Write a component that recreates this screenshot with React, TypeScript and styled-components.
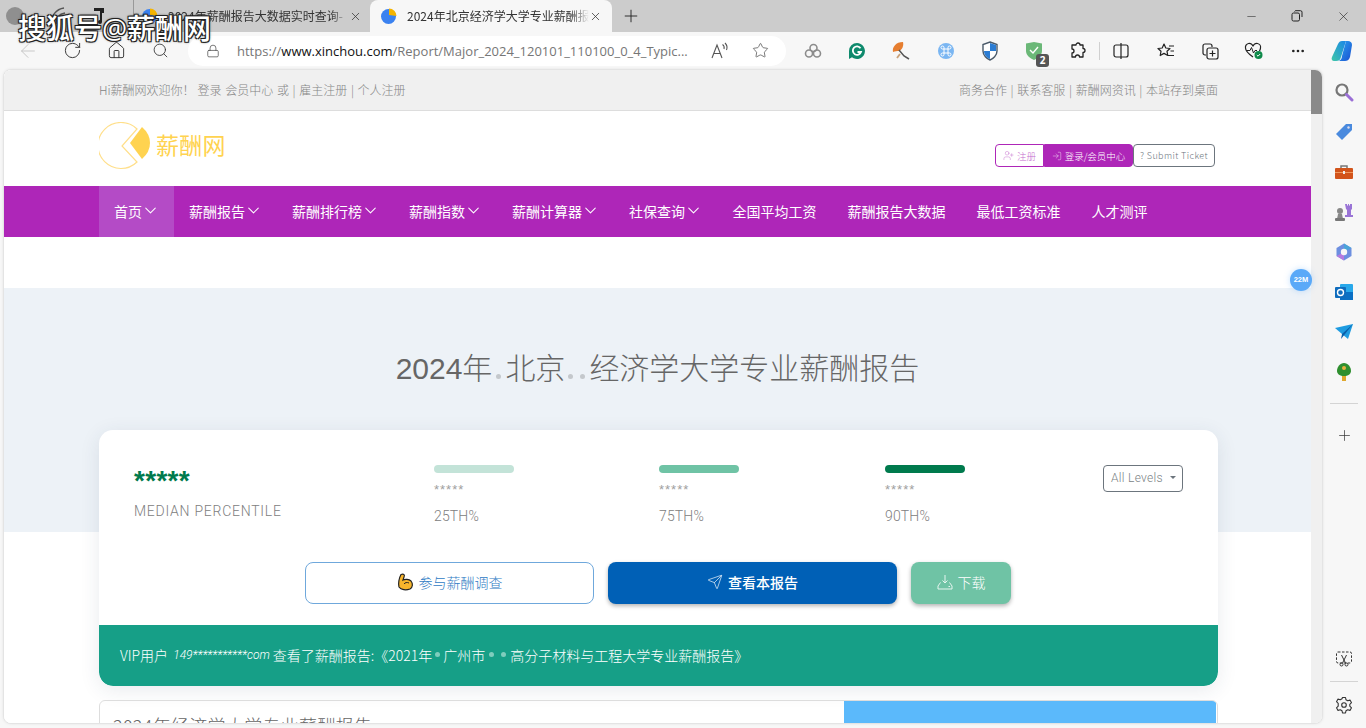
import React from "react";
import styled, { createGlobalStyle } from "styled-components";
import { ArrowLeft, RotateCw, House, Search, Lock, Star, Plus, X, Minus, Ellipsis, ChevronDown, UserPlus, LogIn, Send } from "lucide-react";

const CJK = `"Noto Sans CJK SC", "Noto Sans", sans-serif`;
const UI = `"Open Sans", "Noto Sans CJK SC", sans-serif`;
const LIGHT = `"Roboto", "Noto Sans CJK SC", sans-serif`;

const Global = createGlobalStyle`
  html, body { margin: 0; padding: 0; height: 100%; overflow: hidden; background: #f7f7f7; }
  * { box-sizing: border-box; }
`;

const Shell = styled.div`
  position: relative; width: 1366px; height: 728px; display: flex; flex-direction: column;
  background: #f7f7f7; overflow: hidden; font-family: ${CJK};
`;
const TabStrip = styled.div`
  height: 32px; background: #cccccc; display: flex; align-items: flex-end; flex: none;
`;
const Pinned = styled.div`
  width: 133px; height: 32px; display: flex; align-items: center; padding-left: 6px; gap: 24px; flex: none; color: #555;
`;
const Avatar = styled.span`
  width: 18px; height: 18px; border-radius: 50%; background: #8f8f8f; flex: none;
`;
const Tab = styled.div<{ $active?: boolean }>`
  height: 32px;
  width: ${p => (p.$active ? "242px" : "237px")};
  display: flex; align-items: center; flex: none;
  padding: 0 ${p => (p.$active ? "10px" : "8px")} 0 ${p => (p.$active ? "10px" : "7px")};
  background: ${p => (p.$active ? "#f7f7f7" : "transparent")};
  border-radius: ${p => (p.$active ? "8px 8px 0 0" : "0")};
  border-left: ${p => (p.$active ? "none" : "1px solid #999")};
  color: #333;
`;
const TabTitle = styled.span`
  flex: 1; margin-left: 9px; font: 12px/16px ${CJK}; white-space: nowrap; overflow: hidden;
  mask-image: linear-gradient(90deg, #000 90%, transparent);
`;
const NewTab = styled.div`
  width: 38px; height: 32px; display: flex; align-items: center; justify-content: center; color: #222; flex: none;
`;
const WindowButtons = styled.div`
  margin-left: auto; height: 32px; display: flex; align-items: center; color: #222; flex: none;
`;
const WinBtn = styled.div`
  width: 46px; height: 32px; display: flex; align-items: center; justify-content: center;
`;
const Toolbar = styled.div`
  height: 37px; display: flex; align-items: center; flex: none; padding-left: 6px; color: #333;
`;
const NavIcon = styled.div<{ $dim?: boolean }>`
  width: 44px; height: 36px; display: flex; align-items: center; justify-content: center; flex: none;
  color: ${p => (p.$dim ? "#c4c4c4" : "#333")};
`;
const AddressBar = styled.div`
  width: 598px; height: 30px; margin-left: 6px; border-radius: 15px; background: #fff; display: flex; align-items: center;
  padding: 0 6px 0 18px; flex: none; color: #444;
  & > svg { flex: none; }
`;
const Url = styled.div`
  flex: 1; min-width: 0; overflow: hidden; margin-left: 17px; font: 13px/18px ${UI}; color: #767676; white-space: nowrap;
  b { font-weight: 400; color: #111; }
`;
const AddressIcon = styled.div`
  width: 40px; display: flex; justify-content: center; flex: none; color: #555;
`;
const ExtIcons = styled.div`
  display: flex; align-items: center; margin-left: 5px; flex: 1;
`;
const Ext = styled.div`
  position: relative; width: 44.2px; height: 36px; display: flex; align-items: center; justify-content: center; flex: none;
`;
const ExtBadge = styled.span`
  position: absolute; right: 7px; bottom: 2px; width: 13px; height: 13px; border-radius: 3px; background: #555; color: #fff;
  font: 700 10px/13px ${UI}; text-align: center;
`;
const ToolDivider = styled.span`
  width: 1px; height: 18px; background: #d0d0d0; margin: 0 -1px; flex: none;
`;
const Body = styled.div`
  flex: 1; min-height: 0; display: flex; padding-bottom: 4px;
`;
const Viewport = styled.div`
  position: relative; margin-left: 3px; width: 1320px; flex: none; display: flex; overflow: hidden; background: #fff;
  border: 1px solid #e4e4e4; border-radius: 8px; box-shadow: 0 0 3px rgba(0,0,0,.08);
`;
const Page = styled.div`
  flex: 1; min-width: 0; overflow: hidden; background: #fff;
`;
const Scrollbar = styled.div`
  width: 11px; background: #f0f0f0; flex: none;
`;
const Thumb = styled.div`
  height: 44px; background: #8a8a8a;
`;
const Sidebar = styled.div`
  flex: 1; min-width: 0; display: flex; flex-direction: column; align-items: center; padding: 3px 1px 0 0; margin-bottom: -1px;
`;
const SideIcon = styled.div`
  width: 40px; height: 40px; display: flex; align-items: center; justify-content: center; flex: none; color: #333;
`;
const SideRule = styled.div<{ $tight?: boolean }>`
  width: 28px; height: 1px; background: #d4d4d4; margin: ${p => (p.$tight ? "2px 0 3px" : "11px 0")}; flex: none;
`;
const SideSpacer = styled.div`flex: 1;`;

const TopBar = styled.div`
  height: 41px; background: #f0f0f0; border-bottom: 1px solid #dddddd;
`;
const Container = styled.div`
  width: 1119px; margin-left: 95px;
`;
const TopRow = styled(Container)`
  height: 40px; display: flex; align-items: center; justify-content: space-between; font: 300 12px/18px ${CJK}; color: #858585;
  word-spacing: 1px;
`;
const Welcome = styled.span`margin-right: 3px;`;
const Header = styled(Container)`
  height: 75px; display: flex; justify-content: space-between; align-items: flex-start;
`;
const Logo = styled.div`
  display: flex; align-items: center; margin-top: 11px; color: #ffd350; font: 23px/30px ${CJK};
`;
const LogoText = styled.span`margin: 0 0 4px 5px; letter-spacing: 0.3px;`;
const AccountGroup = styled.div`
  display: flex; margin: 33px 3px 0 0; height: 23px;
`;
const AccountBtn = styled.div<{ $kind: "register" | "login" | "ticket" }>`
  display: flex; align-items: center; justify-content: center; gap: 3px; height: 23px; font: 300 9.5px/14px ${CJK};
  width: ${p => (p.$kind === "register" ? "49px" : p.$kind === "login" ? "89px" : "82px")};
  font-size: ${p => (p.$kind === "ticket" ? "9px" : "9.5px")};
  padding-top: ${p => (p.$kind === "ticket" ? "1px" : "0")};
  border: 1px solid ${p => (p.$kind === "ticket" ? "#6c757d" : "#ae26b8")};
  background: ${p => (p.$kind === "login" ? "#ae26b8" : "#fff")};
  color: ${p => (p.$kind === "login" ? "#fff" : p.$kind === "register" ? "#c46bcd" : "#6c757d")};
  border-radius: ${p => (p.$kind === "register" ? "4px 0 0 4px" : p.$kind === "login" ? "0 4px 4px 0" : "4px")};
  letter-spacing: ${p => (p.$kind === "ticket" ? "0.4px" : "0")};
`;
const Nav = styled.div`
  height: 51px; background: #ae26b8;
`;
const NavRow = styled(Container)`
  height: 51px; display: flex; color: #fff;
`;
const NavItem = styled.div<{ $active?: boolean; $plain?: boolean }>`
  display: flex; align-items: center; height: 51px; font: 400 14px/20px ${CJK}; white-space: nowrap;
  padding: 0 ${p => (p.$plain ? "15.5px" : "15px")} 2px;
  background: ${p => (p.$active ? "#b44bc6" : "transparent")};
`;
const NavChevron = styled.span`
  width: 17px; display: flex; justify-content: center;
  & > svg { flex: none; }
`;
const Gap = styled.div`height: 51px; background: #fff;`;
const Hero = styled.div`
  height: 412px; background: linear-gradient(#edf2f7 244px, #fff 244px);
  padding-top: 60px;
`;
const Title = styled.h1`
  margin: 0; display: flex; justify-content: center; align-items: baseline; font: 300 30px/42px "Liberation Sans", ${CJK}; color: #666; white-space: nowrap;
`;
const Dot = styled.span<{ $left: number; $right: number; $size: number; $color: string }>`
  display: inline-block; flex: none; border-radius: 50%;
  width: ${p => p.$size}px; height: ${p => p.$size}px; background: ${p => p.$color};
  margin: 0 ${p => p.$right}px 0 ${p => p.$left}px;
`;
const Card = styled(Container)`
  margin-top: 40px; background: #fff; border-radius: 14px; box-shadow: 0 4px 20px rgba(40,60,90,.1); overflow: hidden;
`;
const Stats = styled.div`
  display: grid; grid-template-columns: 300px 225px 226px 218px 80px; padding: 35px 0 0 35px; height: 132px;
`;
const StarsBig = styled.div`
  font: 700 28px/26px "Liberation Sans", sans-serif; color: #007a4d; margin-top: 3px; letter-spacing: 0.3px; height: 24px;
`;
const MedianLabel = styled.div`
  font: 300 14px/20px ${LIGHT}; color: #808080; letter-spacing: 0.75px; margin-top: 9px;
`;
const Bar = styled.div<{ $color: string }>`
  width: 80px; height: 8px; border-radius: 4px; background: ${p => p.$color};
`;
const StarsSmall = styled.div`
  font: 400 13px/14px "Liberation Sans", sans-serif; color: #a0a0a0; margin-top: 10px; letter-spacing: 1px;
`;
const PercentLabel = styled.div`
  font: 300 14px/20px ${LIGHT}; color: #808080; margin-top: 9px; letter-spacing: 0.15px;
`;
const LevelSelect = styled.div`
  width: 80px; height: 27px; border: 1px solid #6c757d; border-radius: 4px; display: flex; align-items: center; padding: 0 0 2px 7px;
  font: 300 12px/16px ${LIGHT}; color: #7a7f85; letter-spacing: 0.3px;
`;
const Caret = styled.span`
  margin-left: 7px; border-left: 3px solid transparent; border-right: 3px solid transparent; border-top: 3px solid #6c757d;
`;
const Actions = styled.div`
  display: flex; justify-content: flex-start; gap: 14px; padding-left: 206px; height: 63px;
`;
const ActionBtn = styled.div<{ $kind: "outline" | "primary" | "soft" }>`
  width: ${p => (p.$kind === "soft" ? "100px" : "289px")}; height: 42px; border-radius: 8px; padding-bottom: 3px;
  display: flex; align-items: center; justify-content: center; gap: 5px;
  font: ${p => (p.$kind === "primary" ? "500" : "300")} 14px/20px ${CJK};
  border: ${p => (p.$kind === "outline" ? "1px solid #6fa8dc" : "none")};
  background: ${p => (p.$kind === "outline" ? "#fff" : p.$kind === "primary" ? "#0060b6" : "#6fc3a5")};
  color: ${p => (p.$kind === "outline" ? "#2f7bc4" : "#fff")};
  box-shadow: ${p => (p.$kind === "outline" ? "none" : "0 2px 4px rgba(0,0,0,.3)")};
`;
const Ticker = styled.div`
  height: 61px; background: #169f87; border-radius: 0 0 14px 14px; padding: 0 0 2px 21px; display: flex; align-items: center;
  font: 300 14px/20px ${CJK}; color: #fff; white-space: pre;
  em { font: italic 300 12px/20px ${LIGHT}; margin: 0 0 0 2px; }
`;
const Panel = styled(Container)`
  margin-top: 14px; display: flex; height: 60px; border: 1px solid #dddddd; border-radius: 6px 6px 0 0; overflow: hidden; padding-right: 1px;
`;
const PanelText = styled.div`
  width: 744px; padding: 12px 0 0 13px; font: 300 18px/24px ${CJK}; color: #666; flex: none; white-space: nowrap; letter-spacing: 0.3px;
`;
const PanelBlue = styled.div`flex: 1; background: #5bb9fb;`;
const Badge22 = styled.div`
  position: absolute; left: 1286px; top: 199px; width: 22px; height: 22px; border-radius: 50%; background: #5aa9f8; color: #fff;
  font: 700 7.5px/22px "Liberation Sans", sans-serif; text-align: center; box-shadow: 0 0 6px rgba(90,169,248,.35);
`;
const Watermark = styled.div`
  position: absolute; left: 18px; top: 12px; font: 500 28px/32px ${UI}; color: #fff; white-space: nowrap;
  text-shadow: -1px -1px 0 #222, 1px -1px 0 #222, -1px 1px 0 #222, 1px 1px 0 #222, 0 0 3px #000;
`;

const PieFavicon = () => (
  <svg width="18" height="18" viewBox="0 0 18 18">
    <circle cx="8.5" cy="9.5" r="7.5" fill="#3b82f0" />
    <path d="M9 1.500a7.500 7.500 0 0 1 7.500 7.500L9 8z" fill="#f4b400" />
  </svg>
);
const Swirl = () => (
  <svg width="20" height="20" viewBox="0 0 20 20" fill="none" stroke="#555" strokeWidth="1.400">
    <path d="M3 18C3 10 8 3 16 2M8 18C8 12 11 8 17 7" />
  </svg>
);
const PhoneGlyph = () => (
  <svg width="14" height="18" viewBox="0 0 14 18"><path d="M2 1h10v5H10v9a2 2 0 0 1-4 0 2 2 0 0 1 2-2V4H2z" fill="#222" /></svg>
);
const LogoMark = () => (
  <svg width="40" height="48" viewBox="0 0 40 48" fill="none">
    <path d="M38 7 A 23 23 0 1 0 38 40 L 23 24 Z" stroke="#ffdf8a" strokeWidth="1.200" />
  </svg>
);
const LogoFill = () => (
  <svg width="22" height="34" viewBox="0 0 22 34" style={{ margin: "-6px 0 0 -10px" }}>
    <path d="M13 1 L1 17 L13 33 Q21 26 21 17 Q21 8 13 1 Z" fill="#ffd350" />
  </svg>
);
const Muscle = () => (
  <svg width="17" height="18" viewBox="0 0 17 18">
    <path d="M4 1.500 C7 .5 8 2 7 4 L6 7 C8 6 12 6 14 8 C16 10.500 16 14 13 16 C9 17.500 4 17 2 14 C1 11 2 5 4 1.500 Z" fill="#f7b52c" stroke="#222" strokeWidth="1.200" />
    <path d="M7 11 C8 9.500 10 9 12 10" fill="none" stroke="#222" strokeWidth="1" />
  </svg>
);
const TrayDown = () => (
  <svg width="16" height="16" viewBox="0 0 16 16" fill="none" stroke="#e6f5ef" strokeWidth="1">
    <path d="M8 1v8M5.500 6.500L8 9l2.500-2.500" /><path d="M3.500 8.500L1 12v3h14v-3l-2.500-3.500" /><path d="M11.500 12.500h1.500" />
  </svg>
);
const Shield = () => (
  <svg width="18" height="20" viewBox="0 0 18 20">
    <path d="M9 1 L16 3.500 V10 C16 14.500 12 18 9 19 C6 18 2 14.500 2 10 V3.500 Z" fill="#fff" stroke="#4a5a6a" strokeWidth="1.400" />
    <path d="M9 2 L15 4 V10 H9 Z M9 10 V18 C6 17 3 14 3 10 Z" fill="#2b7cd3" />
  </svg>
);
const GramG = () => (
  <svg width="18" height="18" viewBox="0 0 18 18">
    <path d="M9 1a8 8 0 1 1-5 14.300L1 17V9a8 8 0 0 1 8-8z" fill="#0f8a6d" />
    <path d="M12.500 6.200A4.200 4.200 0 1 0 13 10H9.500" fill="none" stroke="#fff" strokeWidth="1.800" />
  </svg>
);
const Umbrella = () => (
  <svg width="18" height="20" viewBox="0 0 18 20">
    <path d="M1 11 C0 6 4 1 11 1 C12 5 10 9 7 10 C5 10 3 10 1 11Z" fill="#e67e30" />
    <path d="M7 9 L12 15 L17 18" fill="none" stroke="#555" strokeWidth="1.500" />
    <path d="M8 13 L5 17" stroke="#c9a27a" strokeWidth="1.800" />
  </svg>
);
const Rings = () => (
  <svg width="18" height="16" viewBox="0 0 18 16" fill="none" stroke="#8c8c8c" strokeWidth="1.600">
    <circle cx="5" cy="10.500" r="3.500" /><circle cx="13" cy="10.500" r="3.500" /><circle cx="9.500" cy="5" r="3.500" />
  </svg>
);
const CmdCircle = () => (
  <svg width="18" height="18" viewBox="0 0 18 18">
    <circle cx="9" cy="9" r="8" fill="#7ab6f2" />
    <path d="M7 7H11V11H7ZM7 7H5.500A1.500 1.500 0 1 1 7 5.500ZM11 7V5.500A1.500 1.500 0 1 1 12.500 7ZM11 11H12.500A1.500 1.500 0 1 1 11 12.500ZM7 11V12.500A1.500 1.500 0 1 1 5.500 11Z" fill="none" stroke="#fff" strokeWidth="1" />
  </svg>
);
const Guard = () => (
  <svg width="18" height="20" viewBox="0 0 18 20">
    <path d="M1 2.500 L9 1 L17 2.500 V10 C17 14 13 17.500 9 19 C5 17.500 1 14 1 10 Z" fill="#6bb878" />
    <path d="M5 9 L8 12 L13 6" fill="none" stroke="#fff" strokeWidth="1.400" />
  </svg>
);
const Puzzle = () => (
  <svg width="18" height="18" viewBox="0 0 18 18" fill="none" stroke="#222" strokeWidth="1.300" strokeLinejoin="round">
    <path d="M7 3 A2 2 0 0 1 11 3 H14 V6.500 A2 2 0 0 1 14 10.500 V15 H10.500 A2 2 0 0 0 6.500 15 H3 V11 A2 2 0 0 0 3 7 V3 Z" />
  </svg>
);
const Split = () => (
  <svg width="18" height="18" viewBox="0 0 18 18" fill="none" stroke="#222" strokeWidth="1.200">
    <rect x="2" y="3" width="14" height="12" rx="2" /><path d="M9 1v16" />
  </svg>
);
const FavList = () => (
  <svg width="18" height="18" viewBox="0 0 18 18" fill="none" stroke="#222" strokeWidth="1.200" strokeLinejoin="round">
    <path d="M7 2 L8.800 6 L13 6.500 L10 9.300 L10.800 13.500 L7 11.400 L3.200 13.500 L4 9.300 L1 6.500 L5.200 6 Z" /><path d="M12 4h5M13.500 9H17M11 13.500H17" />
  </svg>
);
const Collections = () => (
  <svg width="18" height="18" viewBox="0 0 18 18" fill="none" stroke="#222" strokeWidth="1.200" strokeLinejoin="round">
    <path d="M5 13 H4 A2 2 0 0 1 2 11 V4 A2 2 0 0 1 4 2 H9 A2 2 0 0 1 11 4 V5" /><rect x="6" y="6" width="11" height="11" rx="2" /><path d="M11.500 8.500v6M8.500 11.500h6" />
  </svg>
);
const Health = () => (
  <svg width="20" height="18" viewBox="0 0 20 18">
    <path d="M9 15 C4 11.500 1.500 9 1.500 6 A3.800 3.800 0 0 1 9 4.500 A3.800 3.800 0 0 1 16.500 6 C16.500 7 16 8 15.500 9" fill="none" stroke="#222" strokeWidth="1.200" />
    <path d="M2.500 8.500H6L7.500 5.500L9.500 11L11 8.500H13" fill="none" stroke="#222" strokeWidth="1" />
    <circle cx="14.500" cy="13" r="4" fill="#0f8a4a" />
    <path d="M12.800 13L14 14.200L16.200 12" fill="none" stroke="#fff" strokeWidth="1" />
  </svg>
);
const Copilot = () => (
  <svg width="24" height="24" viewBox="0 0 24 24">
    <defs>
      <linearGradient id="cpA" x1="0" y1="1" x2="1" y2="0"><stop offset="0" stopColor="#3fc7a8" /><stop offset="1" stopColor="#1a86e8" /></linearGradient>
      <linearGradient id="cpB" x1="0" y1="0" x2="1" y2="1"><stop offset="0" stopColor="#2aa6f2" /><stop offset="1" stopColor="#1b4fd0" /></linearGradient>
    </defs>
    <path d="M8 5 C9 3 10 2 12 2 H16 L11 18 C10 21 9 22 6 22 H4 C2 22 1 20 2 18 Z" fill="url(#cpA)" />
    <path d="M16 2 H18 C20 2 22 3 22 6 L20 18 C19 21 17 22 15 22 H9 C11 21 12 19 12 17 Z" fill="url(#cpB)" />
  </svg>
);
const SideSearch = () => (
  <svg width="20" height="20" viewBox="0 0 20 20" fill="none">
    <circle cx="8" cy="8" r="5.500" stroke="#777" strokeWidth="2.200" />
    <path d="M12.500 12.500L18 18" stroke="#9b6fd6" strokeWidth="3" strokeLinecap="round" />
  </svg>
);
const SideTag = () => (
  <svg width="18" height="18" viewBox="0 0 18 18">
    <path d="M11 1 H17 V7 L7 17 L1 11 Z" fill="#4a8ade" /><circle cx="13.500" cy="4.500" r="1.200" fill="#dde" />
  </svg>
);
const SideCase = () => (
  <svg width="18" height="16" viewBox="0 0 18 16">
    <path d="M6 4V2H12V4" fill="none" stroke="#777" strokeWidth="1.500" />
    <rect x="0" y="4" width="18" height="11" rx="1" fill="#d2541b" /><rect x="0" y="8" width="18" height="1" fill="#f09a60" /><rect x="8" y="7" width="2" height="3" fill="#eee" />
  </svg>
);
const SideChess = () => (
  <svg width="20" height="20" viewBox="0 0 20 20">
    <circle cx="6" cy="9" r="3" fill="#888" /><path d="M4 12h4l1 5H3z" fill="#888" /><rect x="1" y="16" width="10" height="3" rx="1" fill="#777" />
    <path d="M11 2h2v1.500h1V2h1v1.500h1V2h2v5l-1 1v5h2v2h-8v-2h2V8l-1-1z" fill="#9a74d6" />
  </svg>
);
const SideM365 = () => (
  <svg width="18" height="18" viewBox="0 0 18 18">
    <path d="M9 0.500 L16.500 5 V13 L9 17.500 L1.500 13 V5 Z" fill="#6d8fe0" /><path d="M9 0.500 L16.500 5 L9 9 Z" fill="#4aa4d8" /><path d="M1.500 13 L9 9 L9 17.500 Z" fill="#b57be0" /><circle cx="9" cy="9" r="3.200" fill="#f7f7f7" />
  </svg>
);
const SideOutlook = () => (
  <svg width="18" height="18" viewBox="0 0 18 18">
    <rect x="5" y="1" width="13" height="16" rx="1" fill="#28a8ea" /><path d="M5 9h13v8H5z" fill="#0a6fc4" /><rect x="0" y="4" width="11" height="11" rx="1" fill="#0f6cbd" />
    <circle cx="5.500" cy="9.500" r="3" fill="none" stroke="#fff" strokeWidth="1.400" />
  </svg>
);
const SidePlane = () => (
  <svg width="18" height="16" viewBox="0 0 18 16">
    <path d="M0 4 L18 0 L13 15 L7 10 Z" fill="#1e9be0" /><path d="M7 10 L18 0 L6 15Z" fill="#0a5ea8" />
  </svg>
);
const SideTree = () => (
  <svg width="16" height="20" viewBox="0 0 16 20">
    <path d="M8 1 C12 1 15 5 15 9 C15 12 12 14 8 14 C4 14 1 12 1 9 C1 5 4 1 8 1Z" fill="#2f8f2f" /><rect x="6" y="14" width="4" height="5" fill="#e0a82e" /><circle cx="8" cy="6" r="2" fill="#e8b040" />
  </svg>
);
const SideShot = () => (
  <svg width="18" height="18" viewBox="0 0 18 18" fill="none" stroke="#333" strokeWidth="1">
    <rect x="1.500" y="2" width="15" height="11" rx="1.500" strokeDasharray="2.500 1.500" />
    <path d="M6.500 5 L10.500 13M11.500 5 L7.500 13" /><circle cx="6.500" cy="14.500" r="1.500" /><circle cx="11.500" cy="14.500" r="1.500" />
  </svg>
);
const Gear = () => (
  <svg width="18" height="18" viewBox="0 0 18 18" fill="none" stroke="#333" strokeWidth="1.100" strokeLinejoin="round">
    <path d="M7.500 1.500h3l.5 2.300 1.700 1 2.300-.7 1.500 2.600-1.700 1.600v1.900l1.700 1.600-1.500 2.600-2.300-.7-1.700 1-.5 2.300h-3l-.5-2.300-1.700-1-2.300.7-1.500-2.600 1.700-1.600V7.300L1.500 5.700 3 3.100l2.300.7 1.700-1z" />
    <circle cx="9" cy="9" r="2.300" />
  </svg>
);
const ReadAloud = () => (
  <svg width="20" height="18" viewBox="0 0 20 18" fill="none" stroke="#555" strokeWidth="1.100">
    <path d="M2 16 L7 3 L12 16M4 11.500H10" /><path d="M12.500 2.500C14 3.500 14.500 5 14 7M15 1C17 3 17.500 5.500 16.500 8" />
  </svg>
);
const Restore = () => (
  <svg width="12" height="12" viewBox="0 0 12 12" fill="none" stroke="#222" strokeWidth="1">
    <rect x="1" y="3" width="7.500" height="8" rx="1.500" /><path d="M3.500 1.500A1.500 1.500 0 0 1 5 .7h4.500A1.500 1.500 0 0 1 11 2.200V7" />
  </svg>
);

const navItems = ["薪酬报告", "薪酬排行榜", "薪酬指数", "薪酬计算器", "社保查询"];
const plainItems = ["全国平均工资", "薪酬报告大数据", "最低工资标准", "人才测评"];
const percentiles = [
  { color: "#c3e3d8", label: "25TH%" },
  { color: "#6fc3a5", label: "75TH%" },
  { color: "#007a4d", label: "90TH%" },
];
const TITLE_DOT = "#c4c8cc";
const TICKER_DOT = "#7fcdbd";

export default function App() {
  return (
    <Shell>
      <Global />
      <TabStrip>
        <Pinned>
          <Avatar />
          <Swirl />
          <PhoneGlyph />
        </Pinned>
        <Tab>
          <PieFavicon />
          <TabTitle>2024年薪酬报告大数据实时查询-</TabTitle>
          <X size={13} strokeWidth={1.4} />
        </Tab>
        <Tab $active>
          <PieFavicon />
          <TabTitle>2024年北京经济学大学专业薪酬报告</TabTitle>
          <X size={13} strokeWidth={1.4} />
        </Tab>
        <NewTab><Plus size={20} strokeWidth={1.1} /></NewTab>
        <WindowButtons>
          <WinBtn><Minus size={13} strokeWidth={1} /></WinBtn>
          <WinBtn><Restore /></WinBtn>
          <WinBtn><X size={15} strokeWidth={1} /></WinBtn>
        </WindowButtons>
      </TabStrip>
      <Toolbar>
        <NavIcon $dim><ArrowLeft size={22} strokeWidth={1} /></NavIcon>
        <NavIcon><RotateCw size={19} strokeWidth={1.2} /></NavIcon>
        <NavIcon><House size={19} strokeWidth={1.2} /></NavIcon>
        <NavIcon><Search size={17} strokeWidth={1.2} /></NavIcon>
        <AddressBar>
          <Lock size={14} strokeWidth={1.2} />
          <Url>https://<b>www.xinchou.com</b>/Report/Major_2024_120101_110100_0_4_Typic...</Url>
          <AddressIcon><ReadAloud /></AddressIcon>
          <AddressIcon><Star size={17} strokeWidth={1.1} /></AddressIcon>
        </AddressBar>
        <ExtIcons>
          <Ext><Rings /></Ext>
          <Ext><GramG /></Ext>
          <Ext><Umbrella /></Ext>
          <Ext><CmdCircle /></Ext>
          <Ext><Shield /></Ext>
          <Ext><Guard /><ExtBadge>2</ExtBadge></Ext>
          <Ext><Puzzle /></Ext>
          <ToolDivider />
          <Ext><Split /></Ext>
          <Ext><FavList /></Ext>
          <Ext><Collections /></Ext>
          <Ext><Health /></Ext>
          <Ext><Ellipsis size={16} strokeWidth={2} color="#222" /></Ext>
          <Ext><Copilot /></Ext>
        </ExtIcons>
      </Toolbar>
      <Body>
        <Viewport>
          <Page>
            <TopBar>
              <TopRow>
                <span><Welcome>Hi薪酬网欢迎你！</Welcome>登录 会员中心 或 | 雇主注册 | 个人注册</span>
                <span>商务合作 | 联系客服 | 薪酬网资讯 | 本站存到桌面</span>
              </TopRow>
            </TopBar>
            <Header>
              <Logo>
                <LogoMark />
                <LogoFill />
                <LogoText>薪酬网</LogoText>
              </Logo>
              <AccountGroup>
                <AccountBtn $kind="register"><UserPlus size={11} strokeWidth={1} />注册</AccountBtn>
                <AccountBtn $kind="login"><LogIn size={10} strokeWidth={1} />登录/会员中心</AccountBtn>
                <AccountBtn $kind="ticket">? Submit Ticket</AccountBtn>
              </AccountGroup>
            </Header>
            <Nav>
              <NavRow>
                <NavItem $active>首页<NavChevron><ChevronDown size={19} strokeWidth={1.3} /></NavChevron></NavItem>
                {navItems.map(n => (
                  <NavItem key={n}>{n}<NavChevron><ChevronDown size={19} strokeWidth={1.3} /></NavChevron></NavItem>
                ))}
                {plainItems.map(n => <NavItem key={n} $plain>{n}</NavItem>)}
              </NavRow>
            </Nav>
            <Gap />
            <Hero>
              <Title>
                <span>2024年</span>
                <Dot $left={4} $right={4} $size={5} $color={TITLE_DOT} />
                <span>北京</span>
                <Dot $left={3} $right={3} $size={5} $color={TITLE_DOT} />
                <Dot $left={4} $right={4} $size={5} $color={TITLE_DOT} />
                <span>经济学大学专业薪酬报告</span>
              </Title>
              <Card>
                <Stats>
                  <div>
                    <StarsBig>*****</StarsBig>
                    <MedianLabel>MEDIAN PERCENTILE</MedianLabel>
                  </div>
                  {percentiles.map(p => (
                    <div key={p.label}>
                      <Bar $color={p.color} />
                      <StarsSmall>*****</StarsSmall>
                      <PercentLabel>{p.label}</PercentLabel>
                    </div>
                  ))}
                  <LevelSelect>All Levels<Caret /></LevelSelect>
                </Stats>
                <Actions>
                  <ActionBtn $kind="outline"><Muscle />参与薪酬调查</ActionBtn>
                  <ActionBtn $kind="primary"><Send size={16} strokeWidth={1} />查看本报告</ActionBtn>
                  <ActionBtn $kind="soft"><TrayDown />下载</ActionBtn>
                </Actions>
                <Ticker>
                  <span>VIP用户 </span><em>149***********com</em><span> 查看了薪酬报告:《2021年</span>
                  <Dot $left={3} $right={3} $size={5} $color={TICKER_DOT} />
                  <span>广州市</span>
                  <Dot $left={4} $right={5} $size={5} $color={TICKER_DOT} />
                  <Dot $left={2} $right={4} $size={5} $color={TICKER_DOT} />
                  <span>高分子材料与工程大学专业薪酬报告》</span>
                </Ticker>
              </Card>
              <Panel>
                <PanelText>2024年经济学大学专业薪酬报告</PanelText>
                <PanelBlue />
              </Panel>
            </Hero>
          </Page>
          <Scrollbar><Thumb /></Scrollbar>
          <Badge22>22M</Badge22>
        </Viewport>
        <Sidebar>
          <SideIcon><SideSearch /></SideIcon>
          <SideIcon><SideTag /></SideIcon>
          <SideIcon><SideCase /></SideIcon>
          <SideIcon><SideChess /></SideIcon>
          <SideIcon><SideM365 /></SideIcon>
          <SideIcon><SideOutlook /></SideIcon>
          <SideIcon><SidePlane /></SideIcon>
          <SideIcon><SideTree /></SideIcon>
          <SideRule />
          <SideIcon><Plus size={17} strokeWidth={1} /></SideIcon>
          <SideSpacer />
          <SideIcon><SideShot /></SideIcon>
          <SideRule $tight />
          <SideIcon><Gear /></SideIcon>
        </Sidebar>
      </Body>
      <Watermark>搜狐号@薪酬网</Watermark>
    </Shell>
  );
}
